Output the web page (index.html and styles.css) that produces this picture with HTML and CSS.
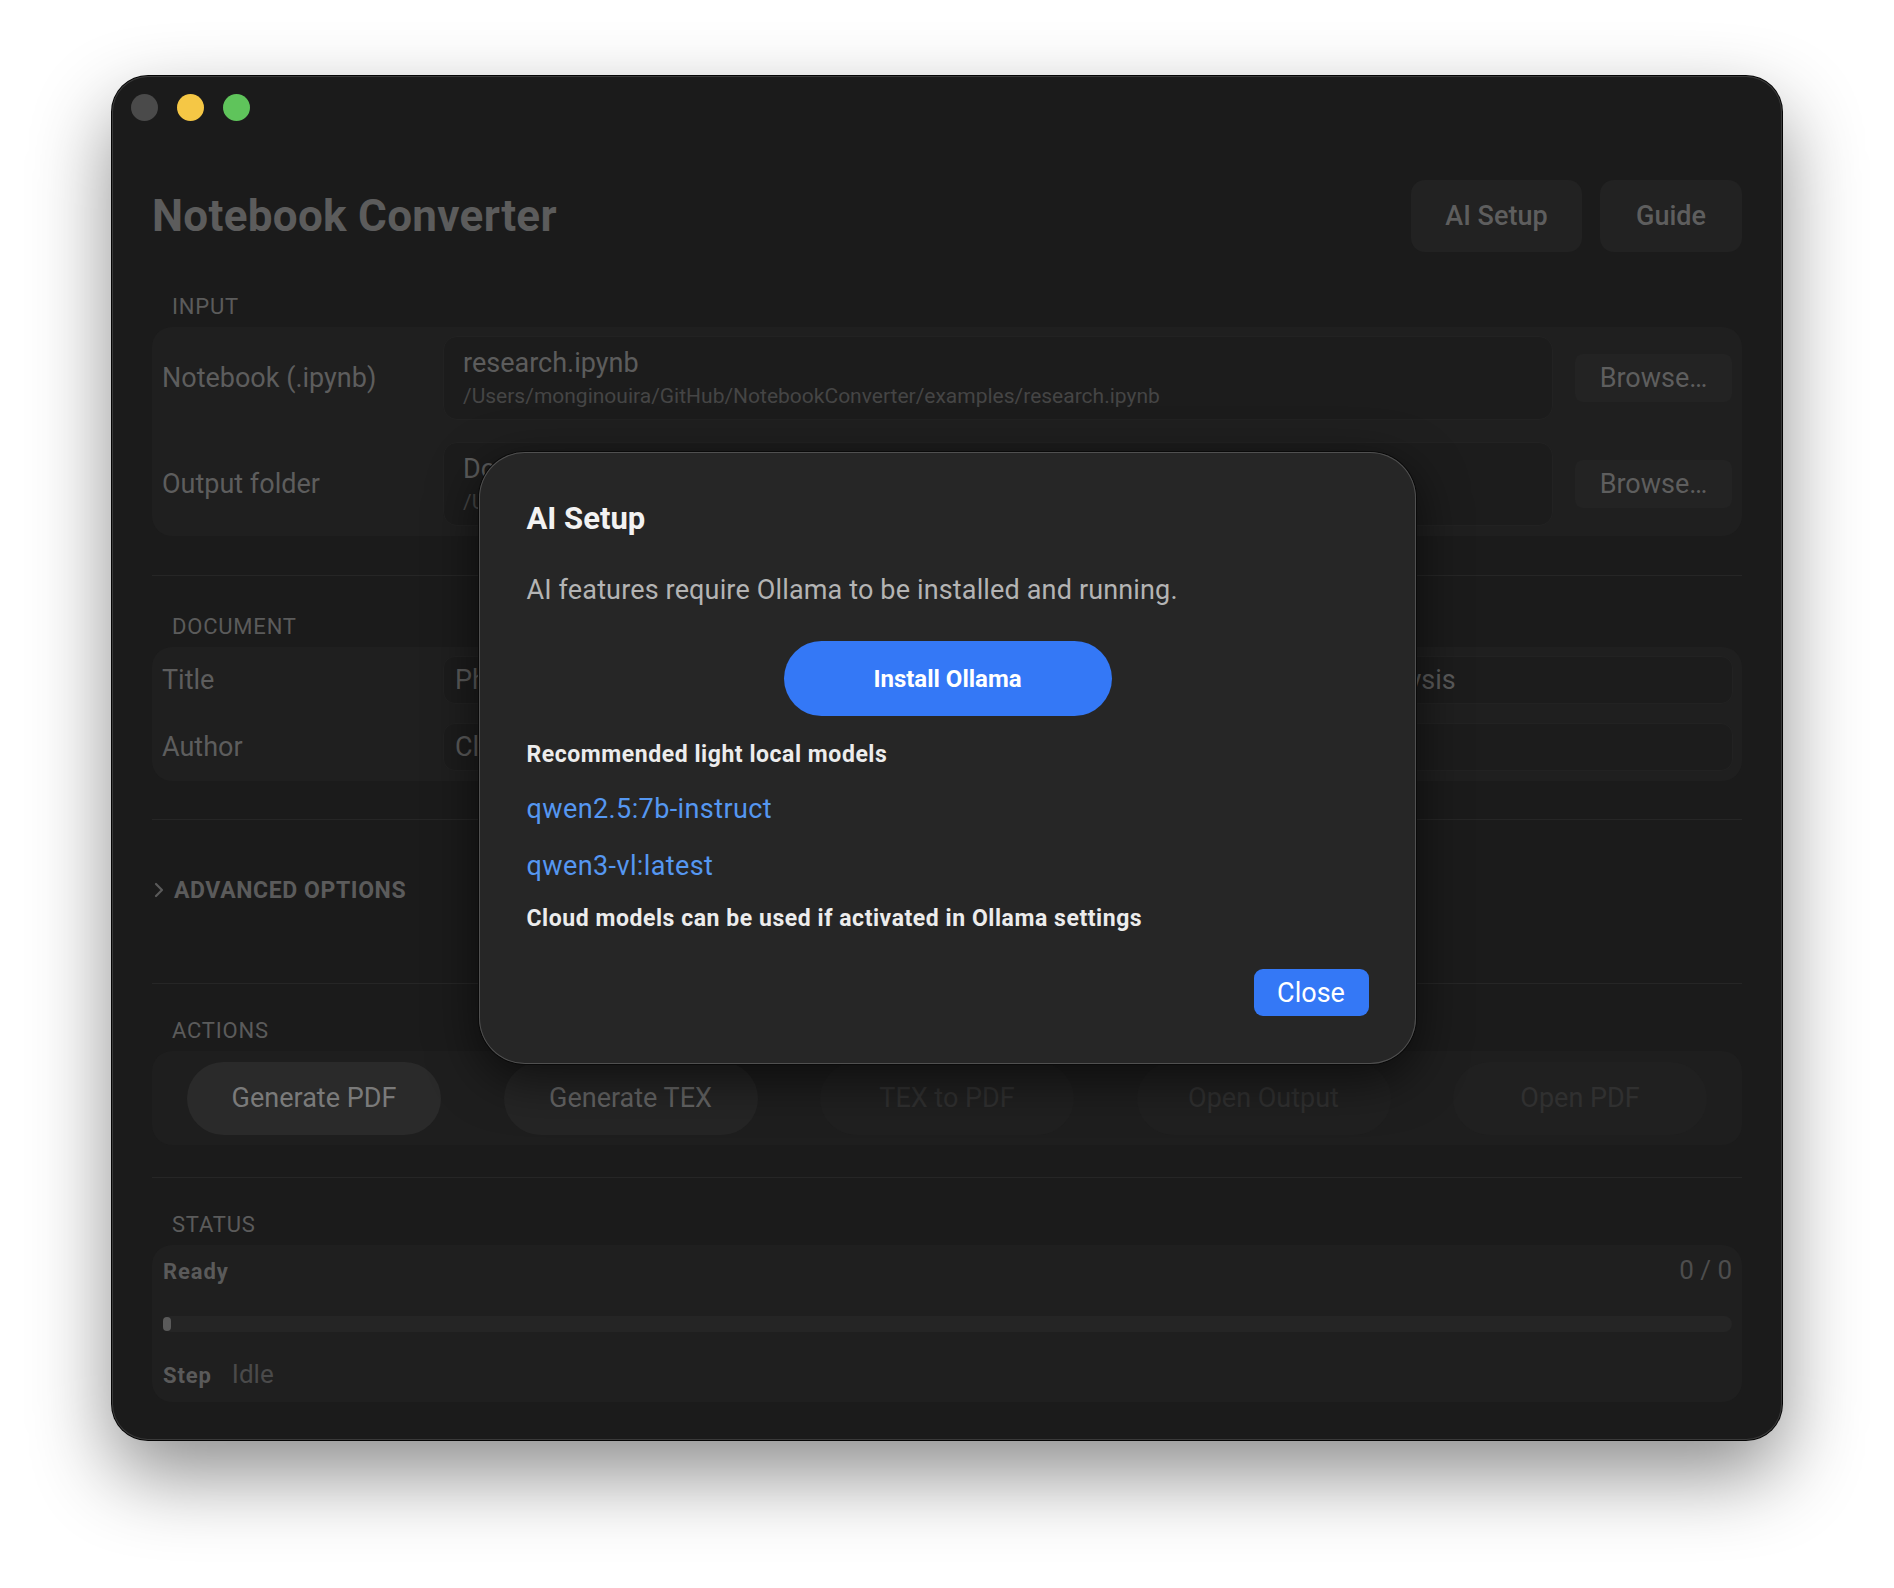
FILE: index.html
```html
<!DOCTYPE html>
<html lang="en">
<head>
  <meta charset="UTF-8">
  <meta name="viewport" content="width=device-width, initial-scale=1.0">
  <title>Notebook Converter</title>
  <link rel="stylesheet" href="styles.css">
</head>
<body>

<div class="window">
  <div class="lights">
    <span class="light light-close"></span>
    <span class="light light-min"></span>
    <span class="light light-max"></span>
  </div>

  <div class="header">
    <h1>Notebook Converter</h1>
    <div class="header-actions">
      <button class="header-btn btn-ai">AI Setup</button>
      <button class="header-btn btn-guide">Guide</button>
    </div>
  </div>

  <div class="section-label label-input">INPUT</div>
  <div class="group group-input">
    <div class="row">
      <div class="row-label">Notebook (.ipynb)</div>
      <div class="path-field">
        <div class="path-name">research.ipynb</div>
        <div class="path-full">/Users/monginouira/GitHub/NotebookConverter/examples/research.ipynb</div>
      </div>
      <button class="browse-btn">Browse…</button>
    </div>
    <div class="row">
      <div class="row-label">Output folder</div>
      <div class="path-field">
        <div class="path-name">Documents</div>
        <div class="path-full">/Users/monginouira/Documents</div>
      </div>
      <button class="browse-btn">Browse…</button>
    </div>
  </div>

  <div class="divider divider-input"></div>

  <div class="section-label label-doc">DOCUMENT</div>
  <div class="group group-doc">
    <div class="row">
      <div class="row-label">Title</div>
      <div class="text-field">Photonic Crystal Resonators: Simulation Results and Experimental Dataset Analysis</div>
    </div>
    <div class="row">
      <div class="row-label">Author</div>
      <div class="text-field">Claire Monginouira</div>
    </div>
  </div>

  <div class="divider divider-doc"></div>

  <div class="advanced">
    <svg class="chevron" width="12" height="16" viewBox="0 0 12 16">
      <polyline points="3,2 9,8 3,14" fill="none" stroke="#5a5a5a" stroke-width="2.2" stroke-linecap="round" stroke-linejoin="round"/>
    </svg>
    <span>ADVANCED OPTIONS</span>
  </div>

  <div class="divider divider-adv"></div>

  <div class="section-label label-actions">ACTIONS</div>
  <div class="group group-actions">
    <button class="action-btn action-main">Generate PDF</button>
    <button class="action-btn action-second">Generate TEX</button>
    <button class="action-btn action-off">TEX to PDF</button>
    <button class="action-btn action-off">Open Output</button>
    <button class="action-btn action-off">Open PDF</button>
  </div>

  <div class="divider divider-actions"></div>

  <div class="section-label label-status">STATUS</div>
  <div class="group group-status">
    <div class="status-row">
      <span class="status-text">Ready</span>
      <span class="status-count">0 / 0</span>
    </div>
    <div class="progress">
      <div class="progress-knob"></div>
    </div>
    <div class="step-row">
      <span class="step-label">Step</span>
      <span class="step-value">Idle</span>
    </div>
  </div>

  <div class="sheet-layer">
    <div class="sheet">
      <h2 class="sheet-title">AI Setup</h2>
      <p class="sheet-text">AI features require Ollama to be installed and running.</p>
      <button class="install-btn">Install Ollama</button>
      <div class="models-heading">Recommended light local models</div>
      <a class="model-link link-first" href="#">qwen2.5:7b-instruct</a>
      <a class="model-link link-second" href="#">qwen3-vl:latest</a>
      <div class="cloud-note">Cloud models can be used if activated in Ollama settings</div>
      <button class="close-btn">Close</button>
    </div>
  </div>
</div>

</body>
</html>
```

FILE: styles.css
```css
html {
  overflow: hidden;
}
body {
  box-sizing: border-box;
  min-height: 1588px;
  margin: 0;
  padding: 76px 0 0 112px;
  background: #ffffff;
  font-family: Roboto, "Liberation Sans", sans-serif;
}
button {
  font-family: inherit;
  border: none;
  cursor: pointer;
}
.window {
  position: relative;
  box-sizing: border-box;
  width: 1670px;
  height: 1364px;
  padding: 18px 40px 0;
  background: #1b1b1b;
  border-radius: 36px;
  box-shadow: inset 0 0 0 1px #3a3a3a, 0 0 0 1px #050505, 0 34px 80px rgba(0, 0, 0, 0.45);
}
.lights {
  display: flex;
  gap: 19px;
  margin-left: -21px;
}
.light {
  width: 27px;
  height: 27px;
  border-radius: 50%;
}
.light-close { background: #4a4a4a; }
.light-min { background: #f5c745; }
.light-max { background: #5fc45b; }

.header {
  display: flex;
  justify-content: space-between;
  align-items: center;
  height: 72px;
  margin-top: 59px;
}
.header h1 {
  margin: 0;
  font-size: 44px;
  font-weight: 700;
  color: #5c5c5c;
  letter-spacing: 0.3px;
}
.header-actions {
  display: flex;
  gap: 18px;
}
.header-btn {
  height: 72px;
  border-radius: 14px;
  background: #222222;
  color: #5e5e5e;
  font-size: 27px;
  font-weight: 500;
}
.btn-ai { width: 171px; }
.btn-guide { width: 142px; }

.section-label {
  font-size: 22px;
  line-height: 26px;
  letter-spacing: 0.8px;
  color: #5b5b5b;
  padding-left: 20px;
  margin-bottom: 7px;
}
.label-input { margin-top: 42px; }
.label-doc { margin-top: 38px; }
.label-actions { margin-top: 34px; }
.label-status { margin-top: 34px; }

.group {
  box-sizing: border-box;
  background: #1f1f1f;
  border-radius: 20px;
}
.group-input {
  display: flex;
  flex-direction: column;
  gap: 22px;
  padding: 9px 10px 10px 10px;
}
.group-doc {
  display: flex;
  flex-direction: column;
  gap: 19px;
  padding: 9px 9px 10px 10px;
}
.row {
  display: flex;
  align-items: center;
}
.row-label {
  flex: 0 0 281px;
  font-size: 27px;
  color: #5d5d5d;
}
.path-field {
  flex: 1;
  box-sizing: border-box;
  height: 84px;
  display: flex;
  flex-direction: column;
  justify-content: center;
  gap: 6px;
  padding-left: 19px;
  background: #1c1c1c;
  border: 1px solid #222222;
  border-radius: 14px;
}
.path-name {
  font-size: 27px;
  line-height: 30px;
  color: #5c5c5c;
}
.path-full {
  font-size: 21px;
  line-height: 24px;
  color: #454545;
}
.browse-btn {
  width: 157px;
  height: 48px;
  margin-left: 22px;
  border-radius: 8px;
  background: #232323;
  color: #5e5e5e;
  font-size: 27px;
}
.text-field {
  flex: 1;
  box-sizing: border-box;
  height: 48px;
  line-height: 46px;
  padding-left: 11px;
  font-size: 27px;
  color: #5a5a5a;
  white-space: nowrap;
  overflow: hidden;
  background: #1c1c1c;
  border: 1px solid #222222;
  border-radius: 12px;
}

.divider {
  height: 1px;
  background: #262626;
}
.divider-input { margin-top: 39px; }
.divider-doc { margin-top: 38px; }
.divider-adv { margin-top: 79px; }
.divider-actions { margin-top: 32px; }

.advanced {
  display: flex;
  align-items: center;
  gap: 9px;
  height: 28px;
  margin-top: 56px;
  padding-left: 1px;
  font-size: 23px;
  font-weight: 700;
  letter-spacing: 0.6px;
  color: #5b5b5b;
}

.group-actions {
  display: flex;
  justify-content: space-between;
  align-items: center;
  height: 94px;
  padding: 0 35px;
  background: #1e1e1e;
}
.action-btn {
  width: 254px;
  height: 73px;
  border-radius: 37px;
  font-size: 27px;
}
.action-main {
  background: #2a2a2a;
  color: #7a7a7a;
}
.action-second {
  background: #252525;
  color: #646464;
}
.action-off {
  background: #202020;
  color: #303030;
}

.group-status {
  padding: 10px 10px 11px 11px;
}
.status-row {
  display: flex;
  justify-content: space-between;
  align-items: baseline;
  line-height: 30px;
}
.status-text,
.step-label {
  font-size: 22px;
  font-weight: 700;
  letter-spacing: 0.9px;
  color: #5a5a5a;
}
.status-count {
  font-size: 26px;
  color: #4d4d4d;
}
.progress {
  height: 16px;
  margin-top: 29px;
  border-radius: 8px;
  background: #252525;
  display: flex;
  align-items: center;
}
.progress-knob {
  width: 8px;
  height: 14px;
  border-radius: 4px;
  background: #5a5a5a;
}
.step-row {
  display: flex;
  align-items: baseline;
  gap: 20px;
  margin-top: 27px;
  line-height: 30px;
}
.step-value {
  font-size: 26px;
  color: #4a4a4a;
}

.sheet-layer {
  position: absolute;
  inset: 0;
  display: flex;
  justify-content: center;
  align-items: center;
}
.sheet {
  box-sizing: border-box;
  width: 937px;
  height: 612px;
  padding: 49px 47px 0 48px;
  display: flex;
  flex-direction: column;
  align-items: flex-start;
  background: #262626;
  border-radius: 46px;
  box-shadow: inset 0 0 0 1px #505050, 0 0 0 1px #0a0a0a, 0 14px 50px rgba(0, 0, 0, 0.6);
}
.sheet-title {
  margin: 0;
  font-size: 31px;
  line-height: 36px;
  font-weight: 700;
  color: #f2f2f2;
}
.sheet-text {
  margin: 37px 0 0;
  font-size: 27px;
  line-height: 32px;
  letter-spacing: 0.15px;
  color: #b4b4b4;
}
.install-btn {
  align-self: center;
  width: 328px;
  height: 75px;
  margin-top: 35px;
  border-radius: 38px;
  background: #3478f6;
  color: #ffffff;
  font-size: 24px;
  font-weight: 700;
}
.models-heading,
.cloud-note {
  font-size: 23px;
  line-height: 28px;
  font-weight: 700;
  letter-spacing: 0.55px;
  color: #ececec;
}
.models-heading { margin-top: 25px; }
.cloud-note { margin-top: 23px; }
.model-link {
  font-size: 27px;
  line-height: 32px;
  letter-spacing: 0.4px;
  color: #5597f1;
  text-decoration: none;
}
.link-first { margin-top: 24px; }
.link-second { margin-top: 25px; }
.close-btn {
  align-self: flex-end;
  width: 115px;
  height: 47px;
  margin-top: 36px;
  border-radius: 9px;
  background: #3478f6;
  color: #ffffff;
  font-size: 27px;
}
```
